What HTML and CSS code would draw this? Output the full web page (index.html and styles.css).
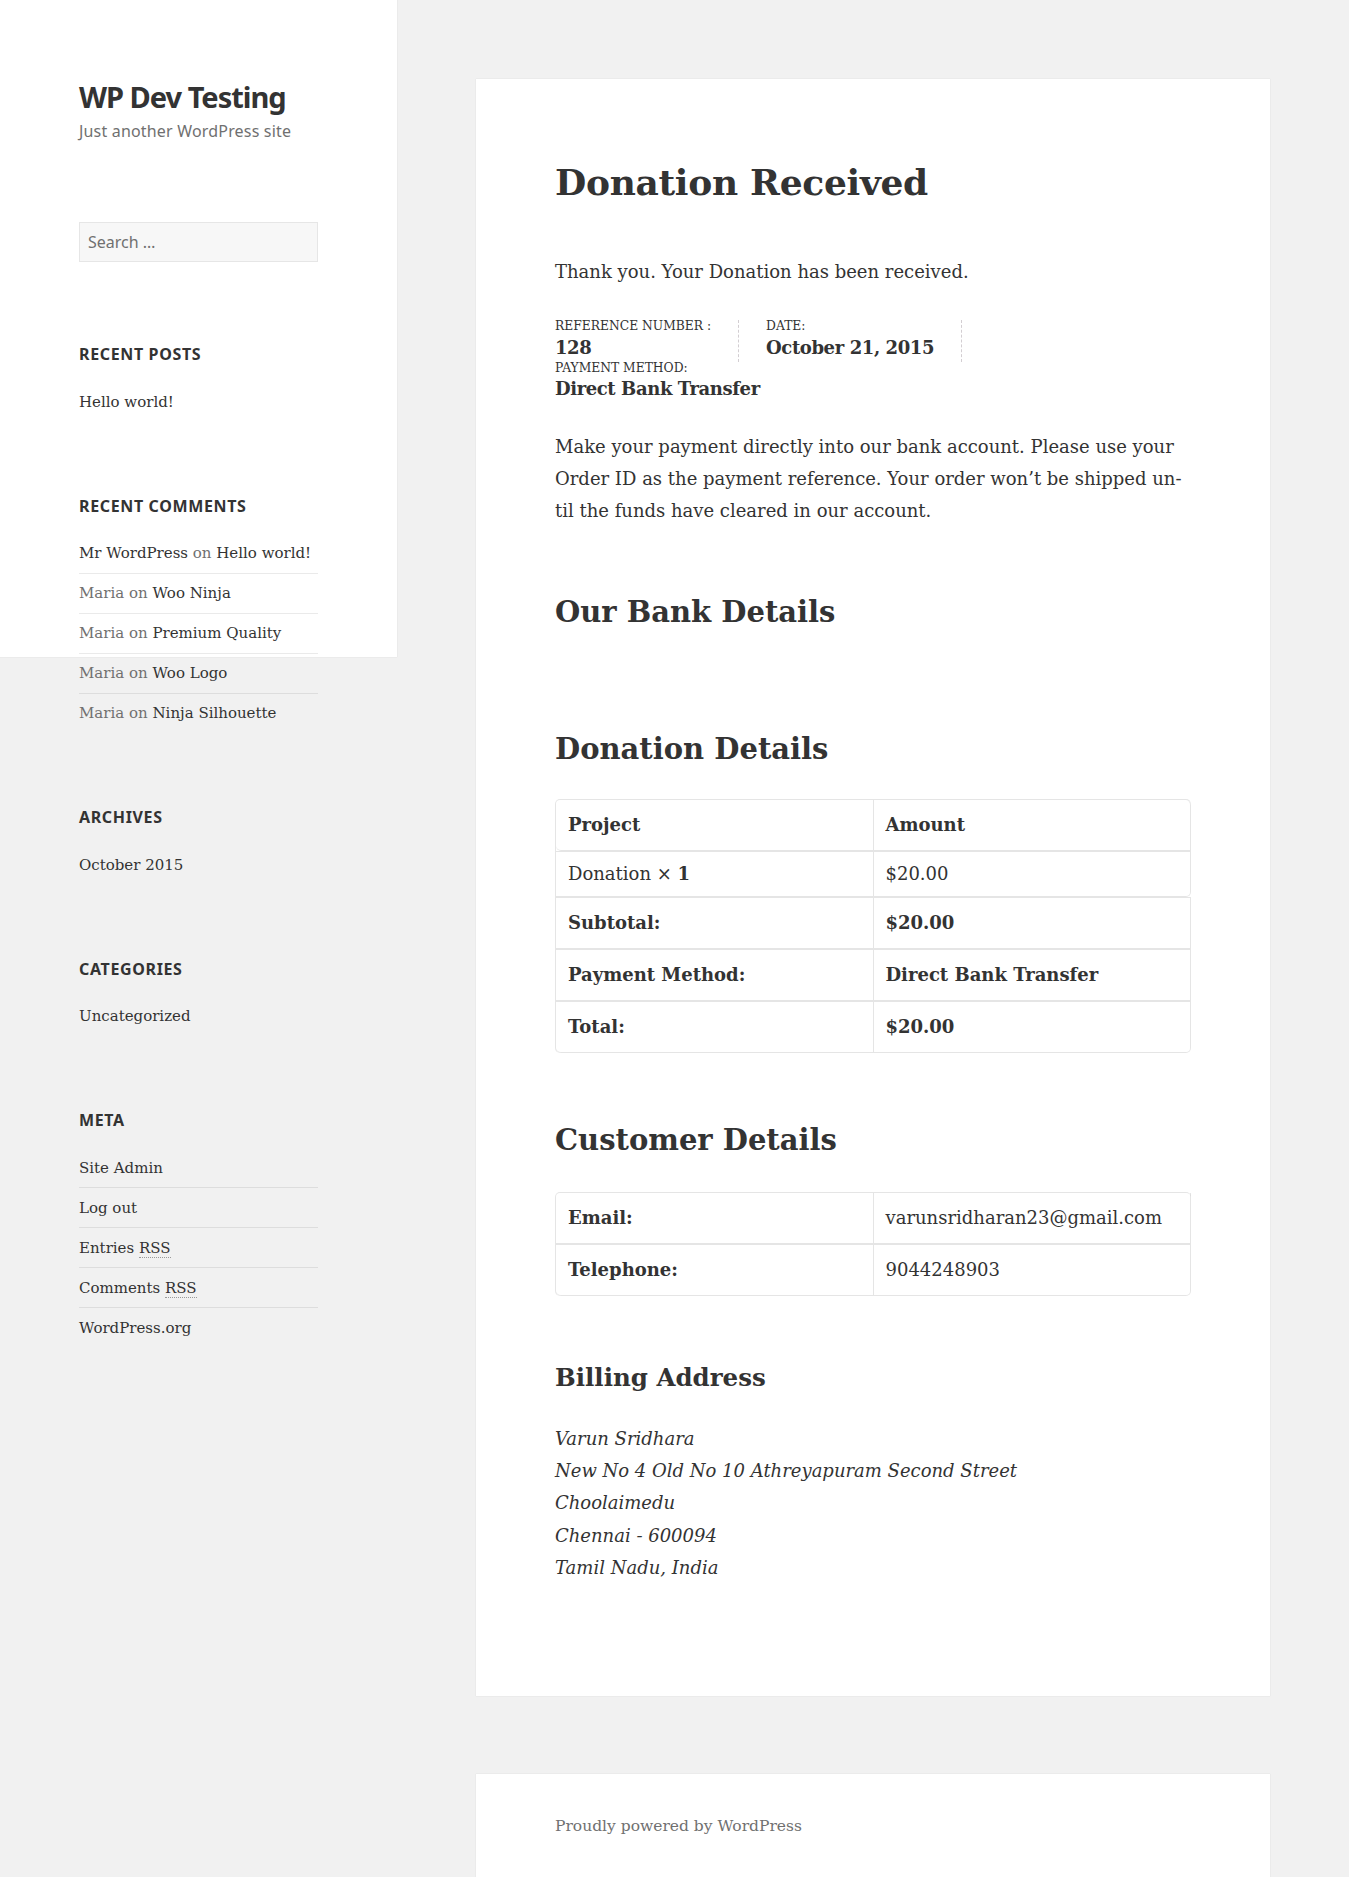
FILE: index.html
```html
<!DOCTYPE html>
<html lang="en">
<head>
<meta charset="utf-8">
<title>Donation Received – WP Dev Testing</title>
<link rel="stylesheet" href="styles.css">
</head>
<body>
<div class="site">
  <aside class="sidebar">
    <header class="site-header">
      <p class="site-title"><a href="#">WP Dev Testing</a></p>
      <p class="site-description">Just another WordPress site</p>
    </header>
    <section class="widget widget-search">
      <form class="search-form"><input class="search-field" type="search" placeholder="Search …"></form>
    </section>
    <section class="widget">
      <h2 class="widget-title">Recent Posts</h2>
      <ul>
        <li><a href="#">Hello world!</a></li>
      </ul>
    </section>
    <section class="widget">
      <h2 class="widget-title">Recent Comments</h2>
      <ul class="recent-comments">
        <li><a href="#">Mr WordPress</a> on <a href="#">Hello world!</a></li>
        <li>Maria on <a href="#">Woo Ninja</a></li>
        <li>Maria on <a href="#">Premium Quality</a></li>
        <li>Maria on <a href="#">Woo Logo</a></li>
        <li>Maria on <a href="#">Ninja Silhouette</a></li>
      </ul>
    </section>
    <section class="widget">
      <h2 class="widget-title">Archives</h2>
      <ul>
        <li><a href="#">October 2015</a></li>
      </ul>
    </section>
    <section class="widget">
      <h2 class="widget-title">Categories</h2>
      <ul>
        <li><a href="#">Uncategorized</a></li>
      </ul>
    </section>
    <section class="widget">
      <h2 class="widget-title">Meta</h2>
      <ul>
        <li><a href="#">Site Admin</a></li>
        <li><a href="#">Log out</a></li>
        <li><a href="#">Entries <abbr title="Really Simple Syndication">RSS</abbr></a></li>
        <li><a href="#">Comments <abbr title="Really Simple Syndication">RSS</abbr></a></li>
        <li><a href="#">WordPress.org</a></li>
      </ul>
    </section>
  </aside>

  <div class="content">
    <main class="site-main">
      <article class="entry">
        <h1 class="entry-title">Donation Received</h1>
        <div class="entry-content">
          <p class="thanks">Thank you. Your Donation has been received.</p>
          <ul class="order-details">
            <li>Reference Number : <strong>128</strong></li>
            <li>Date: <strong>October 21, 2015</strong></li>
            <li>Payment Method: <strong>Direct Bank Transfer</strong></li>
          </ul>
          <p class="bacs-text">Make your payment directly into our bank account. Please use your Order ID as the payment reference. Your order won’t be shipped un-<br>til the funds have cleared in our account.</p>
          <h2 class="h-bank">Our Bank Details</h2>
          <h2 class="h-donation">Donation Details</h2>
          <table class="shop-table">
            <thead>
              <tr><th>Project</th><th>Amount</th></tr>
            </thead>
            <tbody>
              <tr><td>Donation <span class="qty">× <strong>1</strong></span></td><td>$20.00</td></tr>
            </tbody>
            <tfoot>
              <tr><th>Subtotal:</th><td>$20.00</td></tr>
              <tr><th>Payment Method:</th><td>Direct Bank Transfer</td></tr>
              <tr><th>Total:</th><td>$20.00</td></tr>
            </tfoot>
          </table>
          <h2 class="h-customer">Customer Details</h2>
          <table class="shop-table customer">
            <tbody>
              <tr><th>Email:</th><td>varunsridharan23@gmail.com</td></tr>
              <tr><th>Telephone:</th><td>9044248903</td></tr>
            </tbody>
          </table>
          <h3 class="h-billing">Billing Address</h3>
          <address>Varun Sridhara<br>New No 4 Old No 10 Athreyapuram Second Street<br>Choolaimedu<br>Chennai - 600094<br>Tamil Nadu, India</address>
        </div>
      </article>
    </main>
    <footer class="site-footer">
      <a href="#">Proudly powered by WordPress</a>
    </footer>
  </div>
</div>
</body>
</html>
```
FILE: styles.css
```css
html, body {
  margin: 0;
  padding: 0;
}

body {
  background: #f1f1f1;
  color: #333;
  font-family: "DejaVu Serif", "Liberation Serif", serif;
  position: relative;
}

body::before {
  content: "";
  position: absolute;
  top: 0;
  left: 0;
  width: 397px;
  height: 657px;
  background: #fff;
  box-shadow: 0 0 1px rgba(0, 0, 0, 0.15);
}

a {
  color: #333;
  text-decoration: none;
}

.site {
  position: relative;
  display: grid;
  grid-template-columns: 397px 1fr;
}

/* Sidebar */
.sidebar {
  padding-top: 79px;
}

.site-header {
  margin: 0 79px 79px;
}

.site-title {
  margin: 0;
  font: 700 29px/35px "Noto Sans", sans-serif;
  letter-spacing: -1px;
}

.site-description {
  margin: 5px 0 0;
  font: 400 16px/24px "Noto Sans", sans-serif;
  letter-spacing: 0.18px;
  color: #707070;
}

.widget {
  margin: 0 79px 81px;
}

.search-form {
  margin: 0;
}

.search-field {
  box-sizing: border-box;
  width: 239px;
  height: 40px;
  margin: 0;
  padding: 0 8px;
  background: #f7f7f7;
  border: 1px solid #e6e6e6;
  border-radius: 0;
  font: 400 16px/24px "Noto Sans", sans-serif;
  color: #333;
  -webkit-appearance: none;
  appearance: none;
}

.search-field::placeholder {
  color: #707070;
}

.widget-title {
  margin: 0 0 17px;
  font: 700 16px/22px "Noto Sans", sans-serif;
  letter-spacing: 0.04em;
  text-transform: uppercase;
}

.widget ul {
  list-style: none;
  margin: 0;
  padding: 0;
  font-size: 15px;
  line-height: 24px;
}

.widget li {
  border-top: 1px solid rgba(51, 51, 51, 0.1);
  padding: 7.5px 0;
}

.widget li:first-child {
  border-top: 0;
}

.widget li:last-child {
  padding-bottom: 0;
}

.recent-comments li {
  color: #707070;
}

abbr {
  text-decoration: none;
  border-bottom: 1px dotted #999;
}

/* Main */
.content {
  padding: 79px 79px 0;
}

.site-main {
  display: block;
}

.entry {
  background: #fff;
  box-shadow: 0 0 1px rgba(0, 0, 0, 0.15);
  padding: 79px 79px 81px;
}

.entry-title {
  margin: 0 0 50px;
  font-size: 36px;
  line-height: 48px;
  letter-spacing: -0.3px;
  font-weight: 700;
}

.entry-content {
  font-size: 18px;
  line-height: 32.3px;
}

.entry-content p {
  margin: 0;
}

.entry-content .thanks {
  margin-bottom: 32px;
}

.order-details {
  display: flex;
  flex-wrap: wrap;
  list-style: none;
  margin: 0 0 27px;
  padding: 0;
}

.order-details li {
  font-size: 12.3px;
  line-height: 1;
  text-transform: uppercase;
  padding-right: 27px;
  margin-right: 27px;
  border-right: 1px dashed #d3ced2;
}

.order-details li:last-child {
  border-right: 0;
}

.order-details strong {
  display: block;
  font-size: 18px;
  line-height: 29.5px;
  letter-spacing: -0.4px;
  text-transform: none;
}

.entry-content h2 {
  margin: 0;
  font-size: 29px;
  line-height: 38px;
  font-weight: 700;
}

.entry-content .h-bank {
  margin-top: 65px;
}

.entry-content .h-donation {
  margin-top: 99px;
  margin-bottom: 31px;
}

.entry-content .h-customer {
  margin-top: 68.5px;
  margin-bottom: 33px;
}

.shop-table {
  width: 100%;
  border-collapse: separate;
  border-spacing: 0;
  border: 1px solid rgba(0, 0, 0, 0.1);
  border-width: 1px 0 0 1px;
  border-radius: 5px;
  table-layout: fixed;
}

.shop-table th,
.shop-table td {
  text-align: left;
  vertical-align: middle;
  border: 1px solid rgba(0, 0, 0, 0.1);
  border-width: 0 1px 1px 0;
  line-height: 32px;
}

.shop-table tbody tr td,
.shop-table tfoot th,
.shop-table tfoot td,
.shop-table tr + tr th,
.shop-table tr + tr td {
  border-top-width: 1px;
}

.customer tbody tr:first-child th,
.customer tbody tr:first-child td {
  border-top-width: 0;
}

.shop-table th {
  padding: 9px 12px;
  font-weight: 700;
}

.shop-table td {
  padding: 6px 12px;
  font-weight: 400;
}

.shop-table tfoot td {
  font-weight: 700;
}

.qty strong {
  font-weight: 700;
}

.shop-table thead th:last-child {
  border-top-right-radius: 5px;
}

.shop-table tr:last-child td:last-child {
  border-bottom-right-radius: 5px;
}

.shop-table tr:last-child th:first-child {
  border-bottom-left-radius: 5px;
}

.h-billing {
  margin: 63.5px 0 27px;
  font-size: 24.5px;
  line-height: 36px;
  font-weight: 700;
}

address {
  font-style: italic;
  margin: 0 0 30.5px;
}

.site-footer {
  display: block;
  margin: 78px 0 0;
  background: #fff;
  box-shadow: 0 0 1px rgba(0, 0, 0, 0.15);
  padding: 40px 79px;
  font-size: 15.5px;
  line-height: 24px;
}

.site-footer a {
  color: #707070;
}
```
